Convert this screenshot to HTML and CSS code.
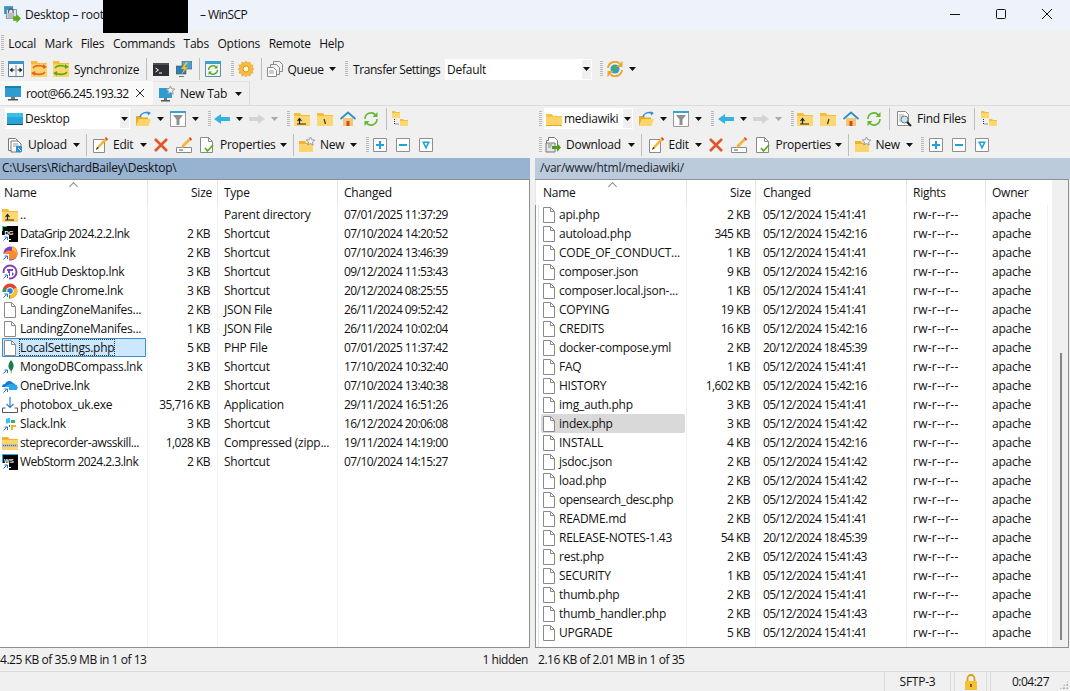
FILE: index.html
```html
<!DOCTYPE html>
<html>
<head>
    <title>Desktop - WinSCP</title>
    <link rel="stylesheet" href="styles.css">
</head>
<body>
    <svg class="defs" width="0" height="0">
        <defs>
            <symbol id="i-file" viewBox="0 0 16 16"><path d="M2.500.5h7l4 4v11h-11z" fill="#fff" stroke="#8a8a8a"/><path d="M9.500.5v4h4" fill="none" stroke="#8a8a8a"/></symbol>
            <symbol id="i-folder" viewBox="0 0 16 16"><path d="M0 3h6l1.500 2H16v10H0z" fill="#f9c33c"/><path d="M0 6h16v9H0z" fill="#fbd469"/><path d="M0 14h16v1H0z" fill="#e9a820"/></symbol>
            <symbol id="i-parent" viewBox="0 0 16 16"><path d="M0 2h6l1.500 2H16v11H0z" fill="#f6bd3a"/><path d="M0 5h16v10H0z" fill="#fcd873"/><path d="M3 13h9M5.500 13V8M3.500 10l2-2.500 2 2.500" fill="none" stroke="#222" stroke-width="1.200"/></symbol>
            <symbol id="i-root" viewBox="0 0 16 16"><path d="M0 2h6l1.500 2H16v11H0z" fill="#f6bd3a"/><path d="M0 5h16v10H0z" fill="#fcd873"/><path d="M7 8l1.500 5" fill="none" stroke="#333" stroke-width="1.200"/></symbol>
            <symbol id="i-root2" viewBox="0 0 16 16"><path d="M0 2h6l1.500 2H16v11H0z" fill="#f6bd3a"/><path d="M0 5h16v10H0z" fill="#fcd873"/><path d="M9 8l-1.500 5" fill="none" stroke="#333" stroke-width="1.200"/></symbol>
            <symbol id="i-home" viewBox="0 0 16 16"><path d="M3 7v8h10V7z" fill="#f2c878"/><path d="M6.500 10h3v5h-3z" fill="#d8481c"/><path d="M.5 8L8 1.500 15.500 8" fill="none" stroke="#2f8fc4" stroke-width="1.800"/></symbol>
            <symbol id="i-refresh" viewBox="0 0 16 16"><path d="M2 8a6 6 0 0 1 10.500-4M14 8a6 6 0 0 1-10.500 4" fill="none" stroke="#62b82e" stroke-width="1.600"/><path d="M14.500 1v5h-5zM1.500 15v-5h5z" fill="#62b82e"/></symbol>
            <symbol id="i-tree" viewBox="0 0 16 16"><path d="M0 0h3l1 1h4v6H0z" fill="#f6bd3a"/><path d="M0 2h8v5H0z" fill="#fcd873"/><path d="M8 8h3l1 1h4v6H8z" fill="#f6bd3a"/><path d="M8 10h8v5H8z" fill="#fcd873"/><path d="M2.500 8v5h4" fill="none" stroke="#333" stroke-dasharray="1 1"/></symbol>
            <symbol id="i-open" viewBox="0 0 16 16"><path d="M1 5h5l1 1.500h6V15H1z" fill="#e8a828"/><path d="M3.500 8H16l-2.500 7H1z" fill="#fcd56a"/><path d="M5 6c1-4 5-5 9-4" fill="none" stroke="#2e8fd0" stroke-width="1.600"/><path d="M12.500.2L16 2l-3 2.500z" fill="#2e8fd0"/></symbol>
            <symbol id="i-filter" viewBox="0 0 16 16"><path d="M.5.500h15v15H.5z" fill="#fff" stroke="#9a9a9a"/><path d="M0 0h16v2H0z" fill="#2ea6d8"/><path d="M3 4h10L9.500 8.500V14h-3V8.500z" fill="#8f8f8f"/></symbol>
            <symbol id="i-back" viewBox="0 0 16 16"><path d="M0 8l7-5v3h9v4H7v3z" fill="#35b2e4"/></symbol>
            <symbol id="i-fwd" viewBox="0 0 16 16"><path d="M16 8l-7-5v3H0v4h9v3z" fill="#d4d4d4"/></symbol>
            <symbol id="i-up" viewBox="0 0 16 16"><path d="M1.500 1.500h7l3 3v9h-10z" fill="#fff" stroke="#777"/><path d="M4 4h7l3 3v8H4z" fill="#fff" stroke="#777"/><path d="M6 7h5M6 9h6" stroke="#999"/><path d="M9 9h6v6H9z" fill="#2b93d6"/><path d="M11 11l3 3" stroke="#fff"/></symbol>
            <symbol id="i-down" viewBox="0 0 16 16"><path d="M1.500 3.500h2v-3h6l3 3v6h-11z" fill="#fff" stroke="#777"/><path d="M1 6h9v9H1z" fill="#e4e4e4" stroke="#777"/><path d="M3 8h4M3 10h3" stroke="#888"/><path d="M7 9h5V6l4 4.500-4 4.500v-3H7z" fill="#4e9e1e"/></symbol>
            <symbol id="i-edit" viewBox="0 0 16 16"><path d="M1.500 2.500h11v13h-11z" fill="#fff" stroke="#8a8a8a"/><path d="M4 13l1-3 8-9 2 2-8 8z" fill="#f2b63a"/><path d="M13 1l1-1 2 2-1 2z" fill="#d8481c"/><path d="M4 13l1-3 2 1z" fill="#333"/></symbol>
            <symbol id="i-del" viewBox="0 0 16 16"><path d="M2 2l12 12M14 2L2 14" fill="none" stroke="#e0562c" stroke-width="2.600"/></symbol>
            <symbol id="i-rename" viewBox="0 0 16 16"><path d="M.5 10.500h15v5H.5z" fill="#fff" stroke="#8a8a8a"/><path d="M4 12v2M6 12v2" stroke="#555"/><path d="M5 11l1-3 7-7 2 2-7 7z" fill="#f2b63a"/><path d="M13 1l1-1 2 2-1 2z" fill="#d8481c"/></symbol>
            <symbol id="i-props" viewBox="0 0 16 16"><path d="M1.500.500h8l4 4v11h-12z" fill="#fff" stroke="#8a8a8a"/><path d="M9.500.500v4h4" fill="none" stroke="#8a8a8a"/><path d="M6 11l2.500 3L14 8" fill="none" stroke="#5caa1e" stroke-width="1.800"/></symbol>
            <symbol id="i-new" viewBox="0 0 16 16"><path d="M0 4h6l1.500 2H11v9H0z" fill="#f0b232"/><path d="M0 7h14v8H0z" fill="#fcd56a"/><path d="M11.500 0l1.300 2.800 3 .3-2.300 2 .7 3-2.700-1.600L8.800 8l.7-3-2.300-2 3-.3z" fill="#f4f4f4" stroke="#999"/></symbol>
            <symbol id="i-plus" viewBox="0 0 16 16"><path d="M1.500 1.500h13v13h-13z" fill="#fff" stroke="#8f8f8f"/><path d="M8 4v8M4 8h8" stroke="#1fa2d8" stroke-width="2"/></symbol>
            <symbol id="i-minus" viewBox="0 0 16 16"><path d="M1.500 1.500h13v13h-13z" fill="#fff" stroke="#8f8f8f"/><path d="M4 8h8" stroke="#1fa2d8" stroke-width="2"/></symbol>
            <symbol id="i-invert" viewBox="0 0 16 16"><path d="M1.500 1.500h13v13h-13z" fill="#fff" stroke="#8f8f8f"/><path d="M4 4.500h8L8 12.500zM6.500 6L8 9l1.500-3z" fill="#1fa2d8" fill-rule="evenodd"/></symbol>
            <symbol id="i-find" viewBox="0 0 16 16"><path d="M1.500.500h8l3 3v11h-11z" fill="#fff" stroke="#8a8a8a"/><path d="M3 4h5M3 6h4M3 8h3M3 10h3" stroke="#aaa"/><circle cx="8.500" cy="8.500" r="3.500" fill="#c4e6f6" stroke="#777"/><path d="M11 11l4 4" stroke="#222" stroke-width="2"/></symbol>
            <symbol id="i-compare" viewBox="0 0 16 16"><path d="M.5.500h15v15H.5z" fill="#f4f8fc" stroke="#5a7f9c"/><path d="M0 0h16v3H0z" fill="#3a94c8"/><path d="M8 4v11" stroke="#888"/><path d="M1.500 9l3-2.500v2h2v1h-2v2zM14.500 9l-3-2.500v2h-2v1h2v2z" fill="#222"/></symbol>
            <symbol id="i-sync1" viewBox="0 0 16 16"><path d="M0 0h6l1 2h9v14H0z" fill="#f6bd3a"/><path d="M0 3h16v13H0z" fill="#fcd56a"/><path d="M2 7c2-3 8-3 11-1" fill="none" stroke="#e8622c" stroke-width="1.600"/><path d="M12 3l4 3-4 2z" fill="#e8622c"/><path d="M14 11c-2 3-8 3-11 1" fill="none" stroke="#e8622c" stroke-width="1.600"/><path d="M4 15l-4-3 4-2z" fill="#e8622c"/></symbol>
            <symbol id="i-sync2" viewBox="0 0 16 16"><path d="M0 0h6l1 2h9v14H0z" fill="#f6bd3a"/><path d="M0 3h16v13H0z" fill="#fcd56a"/><path d="M2 7c2-3 8-3 11-1" fill="none" stroke="#5caa1e" stroke-width="1.600"/><path d="M12 3l4 3-4 2z" fill="#5caa1e"/><path d="M14 11c-2 3-8 3-11 1" fill="none" stroke="#5caa1e" stroke-width="1.600"/><path d="M4 15l-4-3 4-2z" fill="#5caa1e"/></symbol>
            <symbol id="i-term" viewBox="0 0 16 16"><path d="M0 2h16v13H0z" fill="#2c2f33"/><path d="M0 2h16v2H0z" fill="#4a4f55"/><path d="M2.500 7l3 2-3 2M6 12h3" fill="none" stroke="#fff"/></symbol>
            <symbol id="i-putty" viewBox="0 0 16 16"><path d="M6 0h10v8H6z" fill="#4aa3d8" stroke="#555" stroke-width=".6"/><path d="M0 5h10v8H0z" fill="#2c7fb8" stroke="#555" stroke-width=".6"/><path d="M3 15h5v1H3z" fill="#777"/><path d="M10 1L5 8h3l-3 6 7-8H9l3-5z" fill="#f2c02c"/></symbol>
            <symbol id="i-reload" viewBox="0 0 16 16"><path d="M.5.500h15v15H.5z" fill="#f4f8fc" stroke="#5a8fa8"/><path d="M0 0h16v3H0z" fill="#3aa0cc"/><path d="M3.500 9a4.500 4.500 0 0 1 8-2.500M12.500 9a4.500 4.500 0 0 1-8 2.500" fill="none" stroke="#5caa1e" stroke-width="1.400"/><path d="M12.500 4v3.500H9zM3.500 14v-3.500H7z" fill="#5caa1e"/></symbol>
            <symbol id="i-gear" viewBox="0 0 16 16"><path d="M8 0l1.600 2.100 2.500-1 .4 2.600 2.600.4-1 2.500L16 8l-1.900 1.500 1 2.500-2.600.4-.4 2.600-2.500-1L8 16l-1.600-1.900-2.500 1-.4-2.600-2.600-.4 1-2.500L0 8l1.900-1.400-1-2.500 2.600-.4.4-2.600 2.500 1z" fill="#f7bb3c" stroke="#e09a1c" stroke-width=".5"/><circle cx="8" cy="8" r="3" fill="#fff8e4" stroke="#e09a1c"/></symbol>
            <symbol id="i-queue" viewBox="0 0 16 16"><path d="M6.500.500h6l3 3v7h-9z" fill="#f2f2f2" stroke="#8a8a8a"/><path d="M3.500 3.500h6l3 3v7h-9z" fill="#f2f2f2" stroke="#8a8a8a"/><path d="M.5 6.500h6l3 3v6h-9z" fill="#fff" stroke="#8a8a8a"/><path d="M2 10h5M2 12h5" stroke="#999"/></symbol>
            <symbol id="i-globe" viewBox="0 0 16 16"><circle cx="8" cy="8" r="4.500" fill="#2e9fd0"/><path d="M6 5l3-1 1 3-2 2-2-1zM8 10l2 0-1 2z" fill="#4caf3c"/><path d="M1 7a7 7 0 0 1 11.500-4.500M15 9a7 7 0 0 1-11.500 4.500" fill="none" stroke="#f0a62c" stroke-width="2"/><path d="M15.500 0v6h-6zM.5 16v-6h6z" fill="#f0a62c"/></symbol>
            <symbol id="i-monitor" viewBox="0 0 16 16"><path d="M0 1h16v11H0z" fill="#2e9cd0"/><path d="M0 1h16v2H0z" fill="#1c7fb0"/><path d="M6 12h4v2H6z" fill="#777"/><path d="M3 14h10v1.500H3z" fill="#555"/></symbol>
            <symbol id="i-monitor-new" viewBox="0 0 16 16"><path d="M0 2h13v10H0z" fill="#2e9cd0"/><path d="M5 12h3v2H5z" fill="#777"/><path d="M2 14h9v1.500H2z" fill="#555"/><path d="M11.500 0l1.300 2.800 3 .3-2.300 2 .7 3-2.700-1.600L8.800 8l.7-3-2.300-2 3-.3z" fill="#f4f4f4" stroke="#999"/></symbol>
            <symbol id="i-desk" viewBox="0 0 16 16"><path d="M0 2h16v12H0z" fill="#27a5d6"/><path d="M0 2h16v4H0z" fill="#38c0e6"/><path d="M0 13h16v1H0z" fill="#16587c"/></symbol>
            <symbol id="i-lock" viewBox="0 0 16 16"><path d="M4.500 7V4.500a3.500 3.500 0 0 1 7 0V7" fill="none" stroke="#d99e1c" stroke-width="1.800"/><path d="M2 7h12v9H2z" fill="#f7c232"/><path d="M7 10h2v3H7z" fill="#8a5a10"/></symbol>
            <symbol id="i-shortcut" viewBox="0 0 7 7"><path d="M0 0h7v7H0z" fill="#fff"/><path d="M1.500 5.500l3-3M2.500 2h3v3" fill="none" stroke="#1f6fd0"/></symbol>
            <symbol id="i-firefox" viewBox="0 0 16 16"><circle cx="8.500" cy="8.500" r="7" fill="#7a3bd0"/><path d="M2 8a7 7 0 0 0 13 3c1-4-1-8-4-10 1 3 0 4-2 5-3-1-5 0-7 2z" fill="#ff8a2c"/><path d="M10 1c3 2 5 5 5 8-1-2-3-4-5-4z" fill="#ffc22c"/></symbol>
            <symbol id="i-github" viewBox="0 0 16 16"><circle cx="8" cy="8" r="6.500" fill="#fff" stroke="#7b45b8" stroke-width="2"/><path d="M5 5h6v2H8v5H6V7H5zM10 8l2 2-2 2z" fill="#7b45b8"/></symbol>
            <symbol id="i-chrome" viewBox="0 0 16 16"><circle cx="8" cy="8" r="7.500" fill="#e2442f"/><path d="M8 8L1.500 4.500A7.500 7.500 0 0 0 8 15.500z" fill="#2f9e44"/><path d="M8 8l6.500-3.500A7.500 7.500 0 0 1 8 15.500z" fill="#f8c22c"/><circle cx="8" cy="8" r="3.400" fill="#2b7de0" stroke="#fff"/></symbol>
            <symbol id="i-mongo" viewBox="0 0 16 16"><path d="M9 1c2 2.500 3 4.500 2.500 7C11 10 10 11 9.500 12H8.800C8.500 11 7 10 6.500 8 6 5.500 7.500 3 9 1z" fill="#13804a"/><path d="M8.800 12h.8v2h-.8z" fill="#8a7a5a"/></symbol>
            <symbol id="i-onedrive" viewBox="0 0 16 16"><path d="M3 12a3 3 0 0 1 0-6 4.500 4.500 0 0 1 8-1 3.500 3.500 0 0 1 2 1.500 3 3 0 0 1 1 5.500z" fill="#1279d6"/><path d="M5 12a2.500 2.500 0 0 1 1-5 4 4 0 0 1 6 0 2.700 2.700 0 0 1 2 5z" fill="#28a8ea"/></symbol>
            <symbol id="i-install" viewBox="0 0 16 16"><path d="M.5 11v4.500h15V11M.5 11h3M12.500 11h3" fill="none" stroke="#555"/><path d="M8 0v10M4.500 7L8 10.500 11.500 7" fill="none" stroke="#2a7fc8" stroke-width="1.200"/></symbol>
            <symbol id="i-slack" viewBox="0 0 16 16"><path d="M6 2h2v5H6a1 1 0 0 1-2-1V3z" fill="#36c5f0"/><path d="M9 4h4v3H9z" fill="#2eb67d"/><path d="M9 9h2v5H9z" fill="#ecb22e"/><path d="M4 9h4v2H4z" fill="#e01e5a"/><path d="M11 9h3v2h-3z" fill="#ecb22e"/></symbol>
            <symbol id="i-zip" viewBox="0 0 16 16"><path d="M0 2h6l1.500 2H16v11H0z" fill="#f0b232"/><path d="M0 5h16v10H0z" fill="#fcd56a"/><path d="M0 9h16v3H0z" fill="#bdbdbd"/><path d="M1 10.500h14" stroke="#666" stroke-dasharray="1 1"/></symbol>
            <symbol id="i-datagrip" viewBox="0 0 16 16"><path d="M0 0h16v16H0z" fill="#000"/><path d="M0 0h5v1H0zM0 1h1v4H0z" fill="#22d88f"/><path d="M3 13h6v1H3z" fill="#fff"/><text x="2.500" y="8.500" class="ico-txt">DG</text></symbol>
            <symbol id="i-webstorm" viewBox="0 0 16 16"><path d="M0 0h16v16H0z" fill="#000"/><path d="M0 0h16v1H0zM0 0h1v16H0z" fill="#16b6e6"/><path d="M3 13h6v1H3z" fill="#fff"/><text x="2" y="8.500" class="ico-txt">WS</text></symbol>
            <symbol id="i-caret" viewBox="0 0 7 4"><path d="M0 0h7L3.500 4z" fill="#111"/></symbol>
            <symbol id="i-caret-off" viewBox="0 0 7 4"><path d="M0 0h7L3.500 4z" fill="#a8a8a8"/></symbol>
        </defs>
    </svg>

    <header class="titlebar">
        <svg class="app-icon" viewBox="0 0 16 16"><path d="M1 1h8v7H1z" fill="#3a94c8"/><path d="M3 4h9v8H3z" fill="#dce8f2" stroke="#5a7f9c" stroke-width=".7"/><path d="M5 7V5.500a2 2 0 0 1 4 0V7" fill="none" stroke="#555"/><path d="M4 7h6v5H4z" fill="#bbb"/><path d="M9 10h3V8l4 4-4 4v-2H9z" fill="#5caa1e"/></svg>
        <span class="title-a">Desktop – root</span>
        <span class="redacted"></span>
        <span class="title-b">– WinSCP</span>
        <div class="win-buttons">
            <svg viewBox="0 0 10 10"><path d="M0 5.500h10" stroke="#111"/></svg>
            <svg viewBox="0 0 10 10"><rect x=".5" y=".5" width="9" height="9" rx="1" fill="none" stroke="#111"/></svg>
            <svg viewBox="0 0 10 10"><path d="M0 0l10 10M10 0L0 10" stroke="#111"/></svg>
        </div>
    </header>

    <nav class="menubar">
        <span class="grip"></span>
        <span class="menu-item">Local</span>
        <span class="menu-item">Mark</span>
        <span class="menu-item">Files</span>
        <span class="menu-item">Commands</span>
        <span class="menu-item">Tabs</span>
        <span class="menu-item">Options</span>
        <span class="menu-item">Remote</span>
        <span class="menu-item">Help</span>
    </nav>

    <div class="toolbar tb-main">
        <span class="grip"></span>
        <span class="btn"><svg class="ico"><use href="#i-compare"/></svg></span>
        <span class="btn"><svg class="ico"><use href="#i-sync1"/></svg></span>
        <span class="btn btn-text w-sync"><svg class="ico"><use href="#i-sync2"/></svg>Synchronize</span>
        <span class="sep"></span>
        <span class="btn"><svg class="ico"><use href="#i-term"/></svg></span>
        <span class="btn"><svg class="ico"><use href="#i-putty"/></svg></span>
        <span class="sep"></span>
        <span class="btn"><svg class="ico"><use href="#i-reload"/></svg></span>
        <span class="grip grip-gap"></span>
        <span class="btn"><svg class="ico"><use href="#i-gear"/></svg></span>
        <span class="sep"></span>
        <span class="btn btn-text w-queue"><svg class="ico"><use href="#i-queue"/></svg>Queue</span>
        <span class="caret"><svg><use href="#i-caret"/></svg></span>
        <span class="grip grip-gap"></span>
        <span class="plain-label">Transfer Settings</span>
        <span class="combo combo-transfer"><span class="combo-text">Default</span><span class="combo-arrow"><svg><use href="#i-caret"/></svg></span></span>
        <span class="grip grip-gap"></span>
        <span class="btn"><svg class="ico"><use href="#i-globe"/></svg></span>
        <span class="caret"><svg><use href="#i-caret"/></svg></span>
    </div>

    <div class="tabs">
        <span class="tab tab-active"><svg class="ico"><use href="#i-monitor"/></svg><span class="tab-label">root@66.245.193.32</span><svg class="tab-x" viewBox="0 0 10 10"><path d="M1 1l8 8M9 1L1 9" stroke="#222"/></svg></span>
        <span class="tab tab-new"><svg class="ico"><use href="#i-monitor-new"/></svg><span class="tab-label">New Tab</span><span class="caret"><svg><use href="#i-caret"/></svg></span></span>
    </div>

    <main class="panes">
        <section class="pane pane-left">
            <div class="toolbar tb-nav">
                <span class="combo combo-local"><svg class="ico"><use href="#i-desk"/></svg><span class="combo-text">Desktop</span><span class="combo-arrow"><svg><use href="#i-caret"/></svg></span></span>
                <span class="btn"><svg class="ico"><use href="#i-open"/></svg></span><span class="caret"><svg><use href="#i-caret"/></svg></span>
                <span class="btn"><svg class="ico"><use href="#i-filter"/></svg></span><span class="caret"><svg><use href="#i-caret"/></svg></span>
                <span class="grip grip-gap"></span>
                <span class="btn"><svg class="ico"><use href="#i-back"/></svg></span><span class="caret"><svg><use href="#i-caret"/></svg></span>
                <span class="btn"><svg class="ico"><use href="#i-fwd"/></svg></span><span class="caret"><svg><use href="#i-caret-off"/></svg></span>
                <span class="grip grip-gap"></span>
                <span class="btn"><svg class="ico"><use href="#i-parent"/></svg></span>
                <span class="btn"><svg class="ico"><use href="#i-root"/></svg></span>
                <span class="btn"><svg class="ico"><use href="#i-home"/></svg></span>
                <span class="btn"><svg class="ico"><use href="#i-refresh"/></svg></span>
                <span class="sep"></span>
                <span class="btn"><svg class="ico"><use href="#i-tree"/></svg></span>
            </div>
            <div class="toolbar tb-actions">
                <span class="btn btn-text w-upload"><svg class="ico"><use href="#i-up"/></svg>Upload</span><span class="caret"><svg><use href="#i-caret"/></svg></span>
                <span class="sep"></span>
                <span class="btn btn-text w-edit"><svg class="ico"><use href="#i-edit"/></svg>Edit</span><span class="caret"><svg><use href="#i-caret"/></svg></span>
                <span class="btn"><svg class="ico"><use href="#i-del"/></svg></span>
                <span class="btn"><svg class="ico"><use href="#i-rename"/></svg></span>
                <span class="btn btn-text w-props"><svg class="ico"><use href="#i-props"/></svg>Properties</span><span class="caret"><svg><use href="#i-caret"/></svg></span>
                <span class="sep"></span>
                <span class="btn btn-text w-new"><svg class="ico"><use href="#i-new"/></svg>New</span><span class="caret caret-tight"><svg><use href="#i-caret"/></svg></span>
                <span class="grip grip-gap"></span>
                <span class="btn"><svg class="ico"><use href="#i-plus"/></svg></span>
                <span class="btn"><svg class="ico"><use href="#i-minus"/></svg></span>
                <span class="btn"><svg class="ico"><use href="#i-invert"/></svg></span>
            </div>
            <div class="path path-active">C:\Users\RichardBailey\Desktop\</div>
            <div class="list list-local">
                <div class="row head"><span class="sort-up"></span><span class="c-name">Name</span><span class="c-size">Size</span><span class="c-type">Type</span><span class="c-time">Changed</span></div>
                <div class="row"><span class="c-name"><svg class="ico"><use href="#i-parent"/></svg>..</span><span class="c-size"></span><span class="c-type">Parent directory</span><span class="c-time">07/01/2025 11:37:29</span></div>
                <div class="row"><span class="c-name tight"><span class="ico-wrap"><svg class="ico"><use href="#i-datagrip"/></svg><svg class="badge"><use href="#i-shortcut"/></svg></span>DataGrip 2024.2.2.lnk</span><span class="c-size">2 KB</span><span class="c-type">Shortcut</span><span class="c-time">07/10/2024 14:20:52</span></div>
                <div class="row"><span class="c-name"><span class="ico-wrap"><svg class="ico"><use href="#i-firefox"/></svg><svg class="badge"><use href="#i-shortcut"/></svg></span>Firefox.lnk</span><span class="c-size">2 KB</span><span class="c-type">Shortcut</span><span class="c-time">07/10/2024 13:46:39</span></div>
                <div class="row"><span class="c-name"><span class="ico-wrap"><svg class="ico"><use href="#i-github"/></svg><svg class="badge"><use href="#i-shortcut"/></svg></span>GitHub Desktop.lnk</span><span class="c-size">3 KB</span><span class="c-type">Shortcut</span><span class="c-time">09/12/2024 11:53:43</span></div>
                <div class="row"><span class="c-name"><span class="ico-wrap"><svg class="ico"><use href="#i-chrome"/></svg><svg class="badge"><use href="#i-shortcut"/></svg></span>Google Chrome.lnk</span><span class="c-size">3 KB</span><span class="c-type">Shortcut</span><span class="c-time">20/12/2024 08:25:55</span></div>
                <div class="row"><span class="c-name"><svg class="ico"><use href="#i-file"/></svg>LandingZoneManifes...</span><span class="c-size">2 KB</span><span class="c-type">JSON File</span><span class="c-time">26/11/2024 09:52:42</span></div>
                <div class="row"><span class="c-name"><svg class="ico"><use href="#i-file"/></svg>LandingZoneManifes...</span><span class="c-size">1 KB</span><span class="c-type">JSON File</span><span class="c-time">26/11/2024 10:02:04</span></div>
                <div class="row row-selected"><span class="c-name"><svg class="ico"><use href="#i-file"/></svg><span class="focus-text">LocalSettings.php</span></span><span class="c-size">5 KB</span><span class="c-type">PHP File</span><span class="c-time">07/01/2025 11:37:42</span></div>
                <div class="row"><span class="c-name"><span class="ico-wrap"><svg class="ico"><use href="#i-mongo"/></svg><svg class="badge"><use href="#i-shortcut"/></svg></span>MongoDBCompass.lnk</span><span class="c-size">3 KB</span><span class="c-type">Shortcut</span><span class="c-time">17/10/2024 10:32:40</span></div>
                <div class="row"><span class="c-name"><span class="ico-wrap"><svg class="ico"><use href="#i-onedrive"/></svg><svg class="badge"><use href="#i-shortcut"/></svg></span>OneDrive.lnk</span><span class="c-size">2 KB</span><span class="c-type">Shortcut</span><span class="c-time">07/10/2024 13:40:38</span></div>
                <div class="row"><span class="c-name"><svg class="ico"><use href="#i-install"/></svg>photobox_uk.exe</span><span class="c-size">35,716 KB</span><span class="c-type">Application</span><span class="c-time">29/11/2024 16:51:26</span></div>
                <div class="row"><span class="c-name"><span class="ico-wrap"><svg class="ico"><use href="#i-slack"/></svg><svg class="badge"><use href="#i-shortcut"/></svg></span>Slack.lnk</span><span class="c-size">3 KB</span><span class="c-type">Shortcut</span><span class="c-time">16/12/2024 20:06:08</span></div>
                <div class="row"><span class="c-name tight-s"><svg class="ico"><use href="#i-zip"/></svg>steprecorder-awsskill...</span><span class="c-size">1,028 KB</span><span class="c-type">Compressed (zipp...</span><span class="c-time">19/11/2024 14:19:00</span></div>
                <div class="row"><span class="c-name tight"><span class="ico-wrap"><svg class="ico"><use href="#i-webstorm"/></svg><svg class="badge"><use href="#i-shortcut"/></svg></span>WebStorm 2024.2.3.lnk</span><span class="c-size">2 KB</span><span class="c-type">Shortcut</span><span class="c-time">07/10/2024 14:15:27</span></div>
            </div>
        </section>

        <section class="pane pane-right">
            <div class="toolbar tb-nav">
                <span class="grip"></span>
                <span class="combo combo-remote"><svg class="ico"><use href="#i-folder"/></svg><span class="combo-text">mediawiki</span><span class="combo-arrow"><svg><use href="#i-caret"/></svg></span></span>
                <span class="btn"><svg class="ico"><use href="#i-open"/></svg></span><span class="caret"><svg><use href="#i-caret"/></svg></span>
                <span class="btn"><svg class="ico"><use href="#i-filter"/></svg></span><span class="caret"><svg><use href="#i-caret"/></svg></span>
                <span class="grip grip-gap"></span>
                <span class="btn"><svg class="ico"><use href="#i-back"/></svg></span><span class="caret"><svg><use href="#i-caret"/></svg></span>
                <span class="btn"><svg class="ico"><use href="#i-fwd"/></svg></span><span class="caret"><svg><use href="#i-caret-off"/></svg></span>
                <span class="grip grip-gap"></span>
                <span class="btn"><svg class="ico"><use href="#i-parent"/></svg></span>
                <span class="btn"><svg class="ico"><use href="#i-root2"/></svg></span>
                <span class="btn"><svg class="ico"><use href="#i-home"/></svg></span>
                <span class="btn"><svg class="ico"><use href="#i-refresh"/></svg></span>
                <span class="sep"></span>
                <span class="btn btn-text w-find"><svg class="ico"><use href="#i-find"/></svg>Find Files</span>
                <span class="sep"></span>
                <span class="btn"><svg class="ico"><use href="#i-tree"/></svg></span>
            </div>
            <div class="toolbar tb-actions">
                <span class="grip"></span>
                <span class="btn btn-text w-download"><svg class="ico"><use href="#i-down"/></svg>Download</span><span class="caret"><svg><use href="#i-caret"/></svg></span>
                <span class="sep"></span>
                <span class="btn btn-text w-edit"><svg class="ico"><use href="#i-edit"/></svg>Edit</span><span class="caret"><svg><use href="#i-caret"/></svg></span>
                <span class="btn"><svg class="ico"><use href="#i-del"/></svg></span>
                <span class="btn"><svg class="ico"><use href="#i-rename"/></svg></span>
                <span class="btn btn-text w-props"><svg class="ico"><use href="#i-props"/></svg>Properties</span><span class="caret"><svg><use href="#i-caret"/></svg></span>
                <span class="sep"></span>
                <span class="btn btn-text w-new"><svg class="ico"><use href="#i-new"/></svg>New</span><span class="caret caret-tight"><svg><use href="#i-caret"/></svg></span>
                <span class="grip grip-gap"></span>
                <span class="btn"><svg class="ico"><use href="#i-plus"/></svg></span>
                <span class="btn"><svg class="ico"><use href="#i-minus"/></svg></span>
                <span class="btn"><svg class="ico"><use href="#i-invert"/></svg></span>
            </div>
            <div class="path">/var/www/html/mediawiki/</div>
            <div class="list-wrap">
                <div class="list list-remote">
                    <div class="row head"><span class="sort-up"></span><span class="c-name">Name</span><span class="c-size">Size</span><span class="c-time">Changed</span><span class="c-rights">Rights</span><span class="c-owner">Owner</span></div>
                    <div class="row"><span class="c-name"><svg class="ico"><use href="#i-file"/></svg>api.php</span><span class="c-size">2 KB</span><span class="c-time">05/12/2024 15:41:41</span><span class="c-rights">rw-r--r--</span><span class="c-owner">apache</span></div>
                    <div class="row"><span class="c-name"><svg class="ico"><use href="#i-file"/></svg>autoload.php</span><span class="c-size">345 KB</span><span class="c-time">05/12/2024 15:42:16</span><span class="c-rights">rw-r--r--</span><span class="c-owner">apache</span></div>
                    <div class="row"><span class="c-name"><svg class="ico"><use href="#i-file"/></svg>CODE_OF_CONDUCT...</span><span class="c-size">1 KB</span><span class="c-time">05/12/2024 15:41:41</span><span class="c-rights">rw-r--r--</span><span class="c-owner">apache</span></div>
                    <div class="row"><span class="c-name"><svg class="ico"><use href="#i-file"/></svg>composer.json</span><span class="c-size">9 KB</span><span class="c-time">05/12/2024 15:42:16</span><span class="c-rights">rw-r--r--</span><span class="c-owner">apache</span></div>
                    <div class="row"><span class="c-name"><svg class="ico"><use href="#i-file"/></svg>composer.local.json-...</span><span class="c-size">1 KB</span><span class="c-time">05/12/2024 15:41:41</span><span class="c-rights">rw-r--r--</span><span class="c-owner">apache</span></div>
                    <div class="row"><span class="c-name"><svg class="ico"><use href="#i-file"/></svg>COPYING</span><span class="c-size">19 KB</span><span class="c-time">05/12/2024 15:41:41</span><span class="c-rights">rw-r--r--</span><span class="c-owner">apache</span></div>
                    <div class="row"><span class="c-name"><svg class="ico"><use href="#i-file"/></svg>CREDITS</span><span class="c-size">16 KB</span><span class="c-time">05/12/2024 15:42:16</span><span class="c-rights">rw-r--r--</span><span class="c-owner">apache</span></div>
                    <div class="row"><span class="c-name"><svg class="ico"><use href="#i-file"/></svg>docker-compose.yml</span><span class="c-size">2 KB</span><span class="c-time">20/12/2024 18:45:39</span><span class="c-rights">rw-r--r--</span><span class="c-owner">apache</span></div>
                    <div class="row"><span class="c-name"><svg class="ico"><use href="#i-file"/></svg>FAQ</span><span class="c-size">1 KB</span><span class="c-time">05/12/2024 15:41:41</span><span class="c-rights">rw-r--r--</span><span class="c-owner">apache</span></div>
                    <div class="row"><span class="c-name"><svg class="ico"><use href="#i-file"/></svg>HISTORY</span><span class="c-size">1,602 KB</span><span class="c-time">05/12/2024 15:42:16</span><span class="c-rights">rw-r--r--</span><span class="c-owner">apache</span></div>
                    <div class="row"><span class="c-name"><svg class="ico"><use href="#i-file"/></svg>img_auth.php</span><span class="c-size">3 KB</span><span class="c-time">05/12/2024 15:41:41</span><span class="c-rights">rw-r--r--</span><span class="c-owner">apache</span></div>
                    <div class="row row-inactive"><span class="c-name"><svg class="ico"><use href="#i-file"/></svg>index.php</span><span class="c-size">3 KB</span><span class="c-time">05/12/2024 15:41:42</span><span class="c-rights">rw-r--r--</span><span class="c-owner">apache</span></div>
                    <div class="row"><span class="c-name"><svg class="ico"><use href="#i-file"/></svg>INSTALL</span><span class="c-size">4 KB</span><span class="c-time">05/12/2024 15:42:16</span><span class="c-rights">rw-r--r--</span><span class="c-owner">apache</span></div>
                    <div class="row"><span class="c-name"><svg class="ico"><use href="#i-file"/></svg>jsdoc.json</span><span class="c-size">2 KB</span><span class="c-time">05/12/2024 15:41:42</span><span class="c-rights">rw-r--r--</span><span class="c-owner">apache</span></div>
                    <div class="row"><span class="c-name"><svg class="ico"><use href="#i-file"/></svg>load.php</span><span class="c-size">2 KB</span><span class="c-time">05/12/2024 15:41:42</span><span class="c-rights">rw-r--r--</span><span class="c-owner">apache</span></div>
                    <div class="row"><span class="c-name tight-s"><svg class="ico"><use href="#i-file"/></svg>opensearch_desc.php</span><span class="c-size">2 KB</span><span class="c-time">05/12/2024 15:41:42</span><span class="c-rights">rw-r--r--</span><span class="c-owner">apache</span></div>
                    <div class="row"><span class="c-name"><svg class="ico"><use href="#i-file"/></svg>README.md</span><span class="c-size">2 KB</span><span class="c-time">05/12/2024 15:41:41</span><span class="c-rights">rw-r--r--</span><span class="c-owner">apache</span></div>
                    <div class="row"><span class="c-name"><svg class="ico"><use href="#i-file"/></svg>RELEASE-NOTES-1.43</span><span class="c-size">54 KB</span><span class="c-time">20/12/2024 18:45:39</span><span class="c-rights">rw-r--r--</span><span class="c-owner">apache</span></div>
                    <div class="row"><span class="c-name"><svg class="ico"><use href="#i-file"/></svg>rest.php</span><span class="c-size">2 KB</span><span class="c-time">05/12/2024 15:41:43</span><span class="c-rights">rw-r--r--</span><span class="c-owner">apache</span></div>
                    <div class="row"><span class="c-name"><svg class="ico"><use href="#i-file"/></svg>SECURITY</span><span class="c-size">1 KB</span><span class="c-time">05/12/2024 15:41:41</span><span class="c-rights">rw-r--r--</span><span class="c-owner">apache</span></div>
                    <div class="row"><span class="c-name"><svg class="ico"><use href="#i-file"/></svg>thumb.php</span><span class="c-size">2 KB</span><span class="c-time">05/12/2024 15:41:41</span><span class="c-rights">rw-r--r--</span><span class="c-owner">apache</span></div>
                    <div class="row"><span class="c-name"><svg class="ico"><use href="#i-file"/></svg>thumb_handler.php</span><span class="c-size">2 KB</span><span class="c-time">05/12/2024 15:41:43</span><span class="c-rights">rw-r--r--</span><span class="c-owner">apache</span></div>
                    <div class="row"><span class="c-name"><svg class="ico"><use href="#i-file"/></svg>UPGRADE</span><span class="c-size">5 KB</span><span class="c-time">05/12/2024 15:41:41</span><span class="c-rights">rw-r--r--</span><span class="c-owner">apache</span></div>
                </div>
                <div class="scrollbar"><span class="thumb"></span></div>
            </div>
        </section>
    </main>

    <div class="status-panes">
        <div class="status-left"><span>4.25 KB of 35.9 MB in 1 of 13</span><span>1 hidden</span></div>
        <div class="status-right">2.16 KB of 2.01 MB in 1 of 35</div>
    </div>
    <footer class="statusbar">
        <span class="cell cell-proto">SFTP-3</span>
        <span class="cell cell-lock"><svg class="ico"><use href="#i-lock"/></svg></span>
        <span class="cell cell-time">0:04:27</span>
        <span class="size-grip"></span>
    </footer>
</body>
</html>
```

FILE: styles.css
```css
* {
    box-sizing: border-box;
}
html, body {
    margin: 0;
    height: 100%;
}
body {
    width: 1070px;
    height: 691px;
    overflow: hidden;
    display: flex;
    flex-direction: column;
    font-family: "Open Sans", "Noto Sans", sans-serif;
    font-size: 12px;
    letter-spacing: -0.25px;
    color: #111;
    background-color: #f0f0f0;
}
.defs {
    position: absolute;
}
.ico-txt {
    font-family: "Liberation Sans", sans-serif;
    font-size: 6px;
    font-weight: bold;
    letter-spacing: 0;
    fill: #fff;
}
.ico {
    width: 16px;
    height: 16px;
    flex: none;
}

/* title bar */
.titlebar {
    height: 30px;
    flex: none;
    display: flex;
    align-items: flex-start;
    background-color: #eef2fb;
    position: relative;
}
.app-icon {
    width: 18px;
    height: 18px;
    margin: 5px 0 0 3px;
    flex: none;
}
.title-a, .title-b {
    line-height: 30px;
}
.title-a {
    margin-left: 4px;
    width: 78px;
    white-space: nowrap;
}
.redacted {
    width: 85px;
    height: 33px;
    background-color: #000;
    flex: none;
    z-index: 2;
}
.title-b {
    margin-left: 12px;
    letter-spacing: -0.6px;
}
.win-buttons {
    margin-left: auto;
    display: flex;
    gap: 36px;
    padding: 9px 18px 0 0;
}
.win-buttons svg {
    width: 10px;
    height: 10px;
}

/* menu */
.menubar {
    height: 26px;
    flex: none;
    display: flex;
    align-items: center;
    padding-left: 1px;
}
.menu-item {
    padding: 0 4.3px;
}

/* toolbars */
.toolbar {
    display: flex;
    align-items: center;
    flex: none;
    white-space: nowrap;
}
.tb-main {
    height: 26px;
    padding-left: 1px;
}
.tb-nav {
    height: 25px;
    padding-left: 5px;
}
.pane-right .tb-nav {
    padding-left: 4px;
}
.tb-actions {
    height: 27px;
    padding-left: 4px;
}
.grip {
    width: 3px;
    height: 16px;
    flex: none;
    background: repeating-linear-gradient(#b9b9b9 0 1px, transparent 1px 2px);
}
.grip-gap {
    margin-left: 6.5px;
}
.btn {
    width: 23px;
    height: 22px;
    display: flex;
    align-items: center;
    justify-content: center;
    flex: none;
}
.btn-text {
    justify-content: flex-start;
    gap: 5px;
    padding-left: 3px;
}
.w-sync { width: 92.5px; }
.w-queue { width: 63px; }
.w-upload { width: 66px; }
.w-edit { width: 48.5px; padding-left: 3.5px; }
.w-props { width: 82px; padding-left: 4px; }
.w-new { width: 52.5px; padding-left: 3.5px; }
.w-download { width: 83.5px; }
.w-find { width: 78.5px; padding-left: 4px; }
.caret {
    width: 12px;
    height: 22px;
    display: flex;
    align-items: center;
    justify-content: center;
    flex: none;
}
.caret svg, .combo-arrow svg {
    width: 7px;
    height: 4px;
}
.caret-tight {
    width: 11px;
}
.sep {
    width: 1px;
    height: 22px;
    margin: 0 2px 0 3.5px;
    background-color: #bdbdbd;
    flex: none;
}
.plain-label {
    margin: 0 5px;
    width: 87px;
    letter-spacing: -0.42px;
}
.combo {
    display: flex;
    align-items: center;
    height: 21px;
    background-color: #fff;
    flex: none;
}
.combo-text {
    padding-left: 2px;
    flex: 1;
}
.combo-arrow {
    width: 11px;
    height: 100%;
    background-color: #f0f0f0;
    display: flex;
    align-items: center;
    justify-content: center;
    border: 1px solid #fff;
}
.combo-transfer {
    width: 147px;
    margin-right: 1.5px;
}
.combo-local {
    width: 125px;
    padding-left: 2px;
    margin-right: 1px;
}
.combo-remote {
    width: 89px;
    padding-left: 2px;
    margin: 0 1.5px 0 2px;
}

/* tabs */
.tabs {
    height: 24px;
    flex: none;
    display: flex;
    align-items: flex-end;
    border-bottom: 1px solid #dcdcdc;
}
.tab {
    height: 24px;
    display: flex;
    align-items: center;
    flex: none;
}
.tab-active {
    width: 153px;
    background-color: #f9f9f9;
    padding-left: 5px;
}
.tab-new {
    width: 97px;
    padding-left: 6px;
    border-top: 1px solid #e4e4e4;
    border-right: 1px solid #dcdcdc;
}
.tab-label {
    margin-left: 5px;
}
.tab-active .tab-label {
    width: 109px;
    letter-spacing: -0.55px;
}
.tab-new .tab-label {
    width: 52px;
}
.tab-x {
    width: 10px;
    height: 10px;
}

/* panes */
.panes {
    flex: 1;
    min-height: 0;
    display: flex;
    gap: 5px;
}
.pane {
    display: flex;
    flex-direction: column;
    min-width: 0;
}
.pane-left {
    width: 530px;
}
.pane-right {
    width: 535px;
    flex: 1;
}
.path {
    height: 21px;
    flex: none;
    line-height: 20px;
    padding-left: 5px;
    background-color: #bccbdb;
    color: #1a2530;
}
.path-active {
    padding-left: 2px;
    background-color: #97b3d1;
    color: #111;
}
.list {
    flex: 1;
    background-color: #fff;
    position: relative;
    min-width: 0;
}
.list-local {
    border-top: 1px solid #8f8f8f;
    border-right: 1px solid #8f8f8f;
    border-bottom: 1px solid #8f8f8f;
    background-image: linear-gradient(#edf2f8, #edf2f8), linear-gradient(#edf2f8, #edf2f8), linear-gradient(#edf2f8, #edf2f8);
    background-size: 1px 100%;
    background-repeat: no-repeat;
    background-position: 147px 0, 217px 0, 337px 0;
}
.list-wrap {
    flex: 1;
    display: flex;
    min-height: 0;
    border: 1px solid #8f8f8f;
    margin-right: 1px;
}
.list-remote {
    background-image: linear-gradient(#edf2f8, #edf2f8), linear-gradient(#edf2f8, #edf2f8), linear-gradient(#edf2f8, #edf2f8), linear-gradient(#edf2f8, #edf2f8), linear-gradient(#edf2f8, #edf2f8), linear-gradient(#d5e3f3, #d5e3f3);
    background-size: 1px 100%;
    background-repeat: no-repeat;
    background-position: 150px 0, 219px 0, 370px 0, 449px 0, 511px 0, 2px 0;
}
.scrollbar {
    width: 16px;
    flex: none;
    background-color: #f0f0f0;
    position: relative;
}
.thumb {
    position: absolute;
    left: 8px;
    top: 173px;
    bottom: 7px;
    width: 2px;
    background-color: #858585;
}
.row {
    height: 19px;
    display: flex;
    align-items: center;
    white-space: nowrap;
}
.row > span {
    display: flex;
    align-items: center;
    height: 100%;
    flex: none;
    overflow: hidden;
}
.tight {
    letter-spacing: -0.55px;
}
.tight-s {
    letter-spacing: -0.4px;
}
.c-size, .c-time {
    letter-spacing: -0.55px;
}
.c-rights {
    letter-spacing: 0.25px;
}
.head {
    height: 25px;
    background-color: #fff;
    position: relative;
}
.head > span {
    letter-spacing: -0.25px;
}
.head > span + span {
    box-shadow: -1px 0 0 #e5e5e5;
}
.head .sort-up {
    position: absolute;
    left: 70px;
    top: 3px;
    width: 7px;
    height: 7px;
    border-left: 1px solid #888;
    border-top: 1px solid #888;
    transform: rotate(45deg) scale(.9);
    box-shadow: none;
}
.list-remote .head .sort-up {
    left: 73px;
}
.list-local .c-name { width: 148px; padding-left: 2px; gap: 2px; }
.list-local .c-size { width: 70px; justify-content: flex-end; padding-right: 8px; }
.list-local .c-type { width: 120px; padding-left: 6px; }
.list-local .c-time { padding-left: 6px; }
.list-local .head .c-name { padding-left: 4px; }
.list-local .head .c-size { padding-right: 6px; }
.list-remote .c-name { width: 151px; padding-left: 5px; gap: 2px; }
.list-remote .c-size { width: 69px; justify-content: flex-end; padding-right: 6px; }
.list-remote .c-time { width: 151px; padding-left: 7px; }
.list-remote .c-rights { width: 79px; padding-left: 6px; }
.list-remote .c-owner { width: 62px; padding-left: 6px; }
.list-remote .head .c-name { padding-left: 7px; }
.list-remote .head .c-size { padding-right: 5px; }
.ico-wrap {
    position: relative;
    width: 16px;
    height: 16px;
    flex: none;
}
.ico-wrap .ico {
    display: block;
}
.badge {
    position: absolute;
    left: 0;
    bottom: 0;
    width: 7px;
    height: 7px;
}
.row-selected .c-name {
    background-color: #cce8ff;
    box-shadow: inset 0 0 0 1px #3d8ec9;
    margin: 0 2px;
    width: 144px !important;
    padding-left: 0 !important;
    border-radius: 1px;
}
.focus-text {
    outline: 1px dotted #333;
    outline-offset: 0;
    line-height: 15px;
}
.row-inactive .c-name {
    background-color: #d9d9d9;
    border-radius: 2px;
    margin: 0 2px 0 5px;
    width: 144px !important;
    padding-left: 0 !important;
}

/* status */
.status-panes {
    height: 24px;
    flex: none;
    display: flex;
    align-items: center;
    border-bottom: 1px solid #dcdcdc;
    letter-spacing: -0.45px;
}
.status-left {
    width: 528px;
    display: flex;
    justify-content: space-between;
    white-space: nowrap;
}
.status-right {
    margin-left: 10px;
}
.statusbar {
    height: 19px;
    flex: none;
    display: flex;
    justify-content: flex-end;
    gap: 3px;
    position: relative;
}
.cell {
    height: 19px;
    display: flex;
    align-items: center;
    justify-content: center;
    border-left: 1px solid #dcdcdc;
    border-right: 1px solid #dcdcdc;
}
.cell-proto { width: 67px; }
.cell-lock { width: 33px; }
.cell-time { width: 80px; border-right: 0; letter-spacing: -0.5px; }
.size-grip {
    position: absolute;
    right: 1px;
    bottom: 1px;
    width: 10px;
    height: 10px;
    background: radial-gradient(circle, #a5a5a5 0 1px, transparent 1.2px) 0 0 / 3.3px 3.3px;
    clip-path: polygon(100% 0, 100% 100%, 0 100%);
}
```
